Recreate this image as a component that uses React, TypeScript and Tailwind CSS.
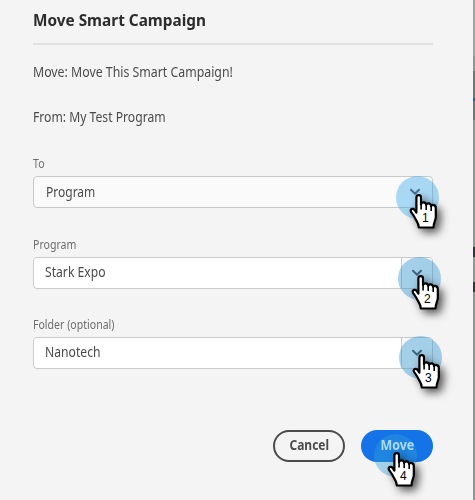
import React from "react";

function Chevron({ className }: { className?: string }) {
  return (
    <svg className={className} width="12" height="8" viewBox="0 0 12 8" fill="none" stroke="#4b4b4b" strokeWidth="2" strokeLinecap="round" strokeLinejoin="round">
      <path d="M2 1.7 6 5.7 10 1.7" />
    </svg>
  );
}

function StepPointer({ step, className, tint = "#2591d0" }: { step: number; className: string; tint?: string }) {
  return (
    <svg className={`pointer-events-none absolute overflow-visible ${className}`} width="43" height="54" viewBox="0 0 43 54">
      <circle cx="21.5" cy="21.5" r="21.5" fill={tint} fillOpacity="0.4" />
      <g className="drop-shadow-[4px_4px_4px_rgba(0,0,0,0.65)]">
        <path
          d="M20.4 36.5V21.5C20.4 18.4 25 18.4 25 21.5V28.2C25.6 25.5 29.8 25.6 30.2 28.8C31 26.5 34.8 26.8 35.2 30C36.2 28.2 39.8 28.8 39.8 32V41C39.8 44 37.5 46.5 37.5 51.5H22.8C22.8 46.5 19.6 44.5 18.2 40.5L15 35.8C13.8 33.2 16.8 31.8 18.5 33.8Z"
          fill="#fff"
          stroke="#000"
          strokeWidth="2.2"
          strokeLinejoin="round"
        />
        <path d="M25.1 27V33.5M30.2 28V34M35.2 29.5V35" fill="none" stroke="#000" strokeWidth="1.6" />
      </g>
      <text x="29.3" y="45.8" textAnchor="middle" className="fill-black font-['Liberation_Sans',sans-serif] text-[12px]">
        {step}
      </text>
    </svg>
  );
}

function Label({ children }: { children: React.ReactNode }) {
  return <div className="h-[16px] origin-left scale-x-[0.88] whitespace-nowrap text-[12px] leading-[18px] text-[#6e6e6e]">{children}</div>;
}

function ComboBox({ value }: { value: string }) {
  return (
    <div className="mt-[5px] flex h-8 rounded-[4px] border border-[#c9c9c9] bg-white">
      <div className="flex-1 pl-[11px] text-[13.5px] leading-[29px] text-[#4b4b4b]">
        <span className="inline-block origin-left scale-x-[0.9]">{value}</span>
      </div>
      <div className="flex w-[31px] items-center justify-center rounded-r-[3px] border-l border-[#c9c9c9] bg-[#f8f8f8]">
        <Chevron />
      </div>
    </div>
  );
}

export default function App() {
  return (
    <div className="relative flex h-[500px] w-[475px] overflow-hidden bg-[#f4f4f4] font-['Noto_Sans',sans-serif]">
      <main className="flex-1 pl-[33px] pr-10">
        <h1 className="flex h-[43px] items-center pb-[3px] text-[16.5px] font-bold leading-6 text-[#2c2c2c]">
          <span className="origin-left scale-x-[0.93] whitespace-nowrap">Move Smart Campaign</span>
        </h1>
        <hr className="h-[2px] border-0 bg-[#e1e1e1]" />
        <p className="mt-[17px] h-5 text-[13.5px] leading-5 text-[#4b4b4b]">
          <span className="inline-block origin-left scale-x-[0.912] whitespace-nowrap">Move: Move This Smart Campaign!</span>
        </p>
        <p className="mt-[25px] h-5 text-[13.5px] leading-5 text-[#4b4b4b]">
          <span className="inline-block origin-left scale-x-[0.9] whitespace-nowrap">From: My Test Program</span>
        </p>
        <section className="mt-[28px]">
          <Label>To</Label>
          <div className="mt-[5px] flex h-8 items-center justify-between rounded-[4px] border border-[#c9c9c9] bg-[#fafafa] pl-3 pr-[11px] text-[13.5px] leading-5 text-[#4b4b4b]">
            <span className="origin-left scale-x-[0.89]">Program</span>
            <Chevron />
          </div>
        </section>
        <section className="mt-[28px]">
          <Label>Program</Label>
          <ComboBox value="Stark Expo" />
        </section>
        <section className="mt-[27px]">
          <Label>Folder (optional)</Label>
          <ComboBox value="Nanotech" />
        </section>
        <footer className="mt-[61px] flex justify-end gap-4">
          <button className="flex h-8 w-[72px] items-center justify-center rounded-full border-2 border-[#4b4b4b] pb-px text-[13.5px] font-bold text-[#4b4b4b]">
            <span className="scale-x-[0.89]">Cancel</span>
          </button>
          <button className="flex h-8 w-[72px] items-center justify-center rounded-full bg-[#1473e6] pb-px text-[13.5px] font-bold text-white">
            <span className="scale-x-[0.92]">Move</span>
          </button>
        </footer>
      </main>
      <aside className="flex w-[2px] flex-col bg-[#929292]">
        <div className="h-[56px] bg-[#a2a2a2]" />
        <div className="h-[15px] bg-[#929292]" />
        <div className="h-[27px] bg-[#757575]" />
        <div className="h-[3px] bg-[#205f9c]" />
        <div className="h-[19px] bg-[#757575]" />
        <div className="mt-[127px] h-[10px] bg-[#3d2f40]" />
        <div className="mt-[25px] h-[10px] bg-[#3d2f40]" />
      </aside>
      <StepPointer step={1} tint="#30a5ee" className="left-[396px] top-[176px]" />
      <StepPointer step={2} className="left-[398px] top-[257px]" />
      <StepPointer step={3} className="left-[399px] top-[336px]" />
      <StepPointer step={4} tint="#309fd8" className="left-[374px] top-[434px]" />
    </div>
  );
}
